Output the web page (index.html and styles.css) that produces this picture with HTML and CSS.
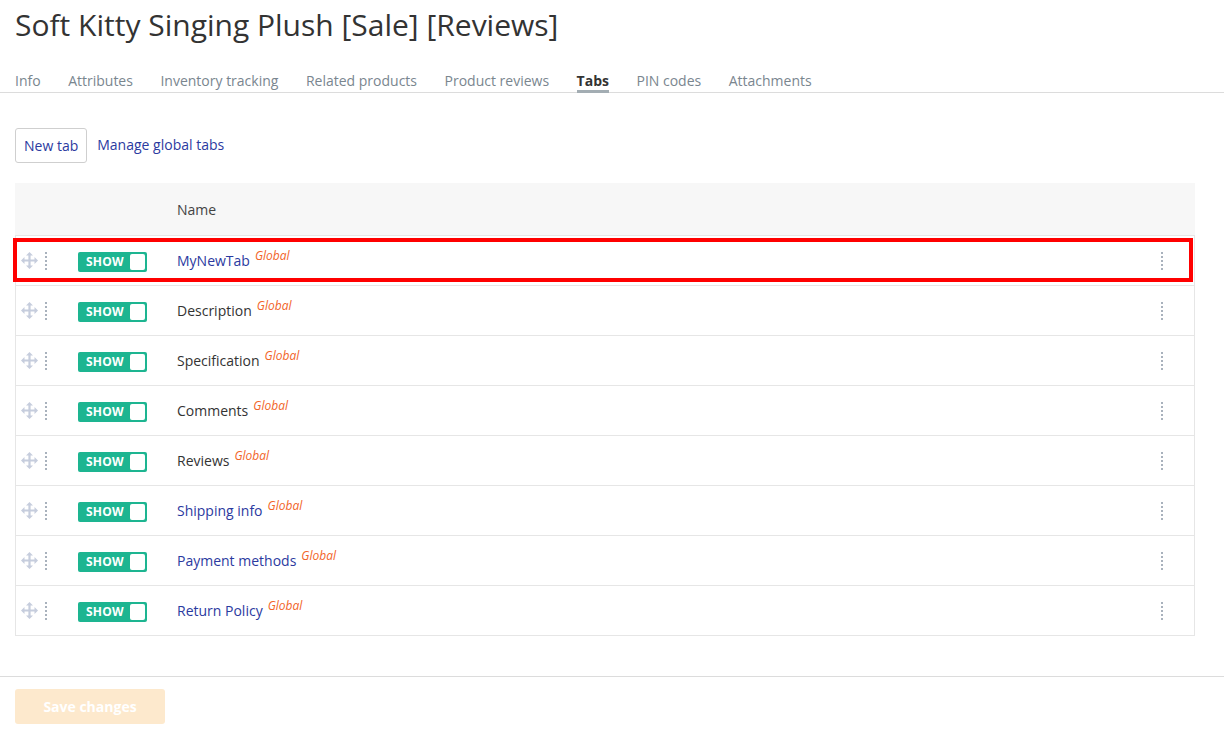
FILE: index.html
```html
<!DOCTYPE html>
<html>
<head>
<meta charset="utf-8">
<link rel="stylesheet" href="styles.css">
</head>
<body>
<h1 class="title">Soft Kitty Singing Plush [Sale] [Reviews]</h1>
<nav class="tabs">
  <a class="tab">Info</a>
  <a class="tab">Attributes</a>
  <a class="tab">Inventory tracking</a>
  <a class="tab">Related products</a>
  <a class="tab">Product reviews</a>
  <a class="tab active">Tabs</a>
  <a class="tab">PIN codes</a>
  <a class="tab">Attachments</a>
</nav>
<div class="content">
  <div class="toolbar">
    <button class="btn">New tab</button>
    <a class="link">Manage global tabs</a>
  </div>
  <div class="table">
    <div class="thead"><div></div><div></div><div class="th">Name</div><div></div></div>
    <div id="rows" class="tbody"></div>
  </div>
</div>
<div class="footer">
  <button class="save">Save changes</button>
</div>
<script src="app.js"></script>
</body>
</html>
```
FILE: app.js
```js
const rows = [
  ["MyNewTab", true],
  ["Description", false],
  ["Specification", false],
  ["Comments", false],
  ["Reviews", false],
  ["Shipping info", true],
  ["Payment methods", true],
  ["Return Policy", true]
];
const dots = '<svg width="2" height="20" viewBox="0 0 2 20"><g fill="#a9b2bd"><rect x="0" y="1" width="2" height="2"/><rect x="0" y="5" width="2" height="2"/><rect x="0" y="9" width="2" height="2"/><rect x="0" y="13" width="2" height="2"/><rect x="0" y="17" width="2" height="2"/></g></svg>';
const move = '<svg width="17" height="17" viewBox="0 0 17 17"><path fill="#c6cddd" d="M8.5 0 L12 3.5 H9.6 V7.4 H13.5 V5 L17 8.5 L13.5 12 V9.6 H9.6 V13.5 H12 L8.5 17 L5 13.5 H7.4 V9.6 H3.5 V12 L0 8.5 L3.5 5 V7.4 H7.4 V3.5 H5 Z"/></svg>';
const container = document.getElementById('rows');
rows.forEach((r, i) => {
  const div = document.createElement('div');
  div.className = 'row' + (i === 0 ? ' highlighted' : '');
  div.innerHTML =
    '<div class="drag">' + move + '<span class="grip">' + dots + '</span></div>' +
    '<div><span class="toggle"><span class="toggle-label">SHOW</span><span class="knob"></span></span></div>' +
    '<div class="name"><span class="' + (r[1] ? 'name-link' : 'name-text') + '">' + r[0] + '</span><sup class="global">Global</sup></div>' +
    '<div class="kebab">' + dots + '</div>' +
    (i === 0 ? '<div class="highlight"></div>' : '');
  container.appendChild(div);
});
```
FILE: styles.css
```css
* { box-sizing: border-box; }
body {
  margin: 0;
  font-family: "Open Sans", "Noto Sans", sans-serif;
  color: #333;
  background: #fff;
}
.title {
  margin: 0;
  padding: 4px 15px 0;
  font-size: 30px;
  font-weight: 400;
  line-height: 42px;
  color: #333;
}
.tabs {
  display: flex;
  gap: 27.5px;
  padding: 26px 15px 0;
  border-bottom: 1px solid #dcdcdc;
}
.tab {
  font-size: 14px;
  line-height: 18px;
  color: #7a868f;
  padding-bottom: 0;
  border-bottom: 3px solid transparent;
  margin-bottom: -1px;
}
.tab.active {
  color: #333;
  font-weight: 700;
  border-bottom-color: #a3adb3;
}
.content {
  padding: 35px 15px 40px 15px;
  width: 1210px;
}
.toolbar {
  display: flex;
  align-items: center;
  gap: 10px;
  margin-bottom: 20px;
}
.btn {
  height: 35px;
  padding: 0 8px;
  font-family: inherit;
  font-size: 14px;
  color: #2b3aa0;
  background: #fff;
  border: 1px solid #cfcfcf;
  border-radius: 3px;
}
.link {
  font-size: 14px;
  color: #2b3aa0;
  padding-bottom: 2px;
}
.table {
  width: 1180px;
}
.thead, .row {
  display: grid;
  grid-template-columns: 62px 99px 1fr 40px;
  align-items: center;
}
.thead {
  height: 52px;
  background: #f7f7f7;
  padding-left: 1px;
}
.th {
  font-size: 14px;
  color: #444;
}
.tbody {
  border-top: 1px solid #e6e6e6;
}
.row {
  position: relative;
  height: 50px;
  border: 1px solid #e6e6e6;
  border-top: none;
}
.drag {
  display: flex;
  align-items: center;
  gap: 7px;
  padding-left: 5px;
}
.drag svg { display: block; }
.grip { display: flex; }
.toggle {
  display: inline-flex;
  align-items: center;
  justify-content: space-between;
  width: 69px;
  height: 20px;
  background: #1db591;
  border-radius: 2px;
  padding: 0 2px 0 8px;
}
.toggle-label {
  color: #fff;
  font-size: 12px;
  font-weight: 700;
  line-height: 20px;
  letter-spacing: 0.2px;
}
.knob {
  width: 15px;
  height: 16px;
  background: #fff;
  border-radius: 2px;
}
.name {
  font-size: 14px;
  line-height: 20px;
}
.name-link { color: #2b3aa0; }
.name-text { color: #333; }
.global {
  margin-left: 5px;
  font-size: 12px;
  font-style: italic;
  color: #f2652a;
  vertical-align: 6px;
  line-height: 0;
}
.kebab {
  display: flex;
  padding-left: 7px;
}
.highlight {
  position: absolute;
  left: -3px;
  right: 1px;
  top: 2px;
  bottom: 3px;
  border: 4px solid #ff0000;
  pointer-events: none;
}
.footer {
  border-top: 1px solid #dcdcdc;
  padding: 12px 15px;
}
.save {
  width: 150px;
  height: 35px;
  font-family: inherit;
  font-size: 14px;
  font-weight: 700;
  color: #fff;
  background: #fde9cd;
  border: none;
  border-radius: 3px;
}
```
